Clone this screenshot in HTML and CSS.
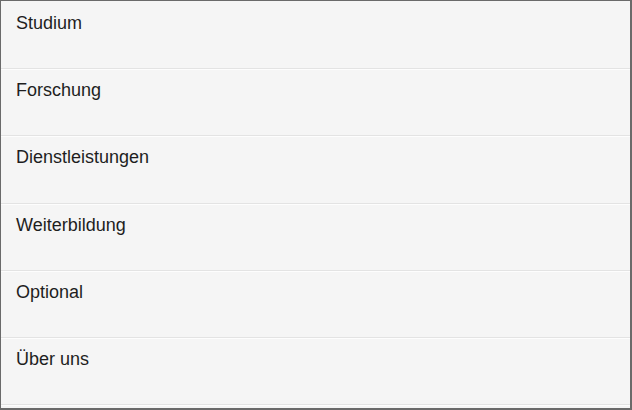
FILE: index.html
```html
<html>
<head>
<meta charset="utf-8">
<link rel="stylesheet" href="styles.css">
</head>
<body>
<div id="menu">
	<ul class="liste">
		<li><a href="#">Studium</a></li>
		<li><a href="#">Forschung</a></li>
		<li><a href="#">Dienstleistungen</a></li>
		<li><a href="#">Weiterbildung</a></li>
		<li><a href="#">Optional</a></li>
		<li><a href="#">Über uns</a></li>
	</ul>
</div>
</body>
</html>
```
FILE: styles.css
```css
body {
	margin: 0;
	font-family: "Liberation Sans", Arial, sans-serif;
}
#menu {
	box-sizing: border-box;
	width: 632px;
	height: 410px;
	background: #f5f5f5;
	border: 1px solid #6a6a6a;
	border-right-width: 2px;
	border-bottom-width: 2px;
	overflow: hidden;
}
.liste {
	list-style: none;
	margin: 0;
	padding: 1px 0 0;
}
.liste li {
	box-sizing: border-box;
	height: 67.2px;
	padding: 10px 15px 0;
	border-bottom: 1px solid #e3e3e3;
	box-shadow: 0 1px 0 #fdfdfd;
}
.liste a {
	color: #1e1e1e;
	font-size: 18px;
	line-height: 22px;
	text-decoration: none;
}
```
